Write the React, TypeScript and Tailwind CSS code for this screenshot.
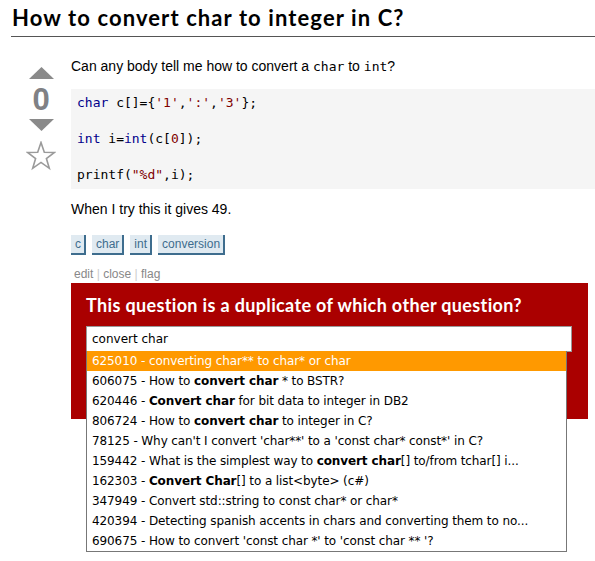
import React from 'react';

const tags = ['c', 'char', 'int', 'conversion'];

// each row: [id, parts] — parts alternate plain / bold
const results: [string, [string, boolean][]][] = [
  ['625010', [['converting char** to char* or char', false]]],
  ['606075', [['How to ', false], ['convert char', true], [' * to BSTR?', false]]],
  ['620446', [['Convert char', true], [' for bit data to integer in DB2', false]]],
  ['806724', [['How to ', false], ['convert char', true], [' to integer in C?', false]]],
  ['78125', [["Why can't I convert 'char**' to a 'const char* const*' in C?", false]]],
  ['159442', [['What is the simplest way to ', false], ['convert char', true], ['[] to/from tchar[] i...', false]]],
  ['162303', [['Convert Char', true], ['[] to a list<byte> (c#)', false]]],
  ['347949', [['Convert std::string to const char* or char*', false]]],
  ['420394', [['Detecting spanish accents in chars and converting them to no...', false]]],
  ['690675', [["How to convert 'const char *' to 'const char ** '?", false]]],
];

const kw = 'text-[#00008b]';
const str = 'text-[#800000]';

function VoteCell() {
  return (
    <div className="flex w-[71px] shrink-0 flex-col items-center pl-[11px] pt-[30px]">
      <svg width="25" height="12" viewBox="0 0 25 12">
        <polygon points="12.5,0 25,12 0,12" fill="#8a8a8a" />
      </svg>
      <div className="mt-[4px] text-[31px] font-bold leading-[34px] text-[#808185]" style={{ fontFamily: '"Liberation Sans", Arial, sans-serif' }}>
        0
      </div>
      <svg width="25" height="12" viewBox="0 0 25 12" className="mt-[2px]">
        <polygon points="0,0 25,0 12.5,12" fill="#8a8a8a" />
      </svg>
      <svg width="30" height="30" viewBox="0 0 30 30" className="mt-[10px]">
        <polygon
          points="15,1.5 18.3,11.2 28.5,11.4 20.4,17.5 23.3,27.3 15,21.4 6.7,27.3 9.6,17.5 1.5,11.4 11.7,11.2"
          fill="none"
          stroke="#9a9a9a"
          strokeWidth="1.6"
          strokeLinejoin="miter"
        />
      </svg>
    </div>
  );
}

export default function App() {
  const mono = { fontFamily: '"DejaVu Sans Mono", "Liberation Mono", monospace' };
  const tahoma = { fontFamily: '"DejaVu Sans", Verdana, sans-serif' };
  const trebuchet = { fontFamily: 'Lato, "DejaVu Sans", sans-serif' };

  return (
    <div className="relative h-[561px] w-[595px] overflow-hidden bg-white text-black" style={{ fontFamily: '"Liberation Sans", Arial, sans-serif' }}>
      {/* title */}
      <h1
        className="ml-[11px] border-b border-[#555] pb-[5px] pt-[4px] pl-[1px] text-[22px] font-bold leading-[27px] tracking-[1.1px]"
        style={trebuchet}
      >
        How to convert char to integer in C?
      </h1>

      <div className="flex">
        <VoteCell />

        <div className="min-w-0 flex-1 pt-[20px]">
          <p className="text-[14px] leading-[18px]">
            Can any body tell me how to convert a <code className="text-[13px]" style={mono}>char</code> to{' '}
            <code className="text-[13px]" style={mono}>int</code>?
          </p>

          {/* code block */}
          <pre className="mt-[13px] bg-[#f5f5f5] py-[5px] pl-[6px] text-[13px] leading-[18px]" style={mono}>
            <span className={kw}>char</span> c[]={'{'}
            <span className={str}>'1'</span>,<span className={str}>':'</span>,<span className={str}>'3'</span>
            {'};'}
            {'\n\n'}
            <span className={kw}>int</span> i=<span className={kw}>int</span>(c[<span className={str}>0</span>]);
            {'\n\n'}
            printf(<span className={str}>"%d"</span>,i);
          </pre>

          <p className="mt-[11px] text-[14px] leading-[18px]">When I try this it gives 49.</p>

          {/* tags */}
          <div className="mt-[17px] flex gap-[6px]">
            {tags.map((t) => (
              <span
                key={t}
                className="border-b-2 border-r-2 border-[#3e6d8e] bg-[#e0eaf1] pl-[4px] pr-[3px] text-[12px] leading-[18px] text-[#3e6d8e]"
              >
                {t}
              </span>
            ))}
          </div>

          {/* post menu */}
          <div className="mt-[12px] pl-[3px] text-[12px] leading-[14px] text-[#888]">
            edit <span className="text-[#ccc]">|</span> close <span className="text-[#ccc]">|</span> flag
          </div>

          {/* close-as-duplicate panel */}
          <div className="relative mt-[2px] mr-[7px] h-[136px] bg-[#aa0000] px-[15px] pt-[10px]">
            <h2 className="text-[18px] font-bold leading-[24px] tracking-[0.35px] text-white" style={trebuchet}>
              This question is a duplicate of which other question?
            </h2>
            <div className="mt-[9px] mr-[1px] h-[26px] border border-[#999] bg-white pl-[5px] text-[12px] leading-[24px]" style={tahoma}>
              convert char
            </div>

            {/* autocomplete popup */}
            <div className="absolute left-[15px] top-[68px] w-[481px] border border-t-0 border-[#777] bg-white" style={tahoma}>
              {results.map(([id, parts], i) => (
                <div
                  key={id}
                  className={
                    i === 0
                      ? 'h-[20px] truncate bg-[#ff9900] pl-[5px] text-[12px] leading-[20px] tracking-[-0.1px] text-white'
                      : 'h-[20px] truncate pl-[5px] text-[12px] leading-[20px] tracking-[-0.1px] text-black'
                  }
                >
                  {id} -{' '}
                  {parts.map(([txt, b], j) => (
                    <span key={j} className={b ? 'font-bold' : ''}>
                      {txt}
                    </span>
                  ))}
                </div>
              ))}
            </div>
          </div>
        </div>
      </div>
    </div>
  );
}
